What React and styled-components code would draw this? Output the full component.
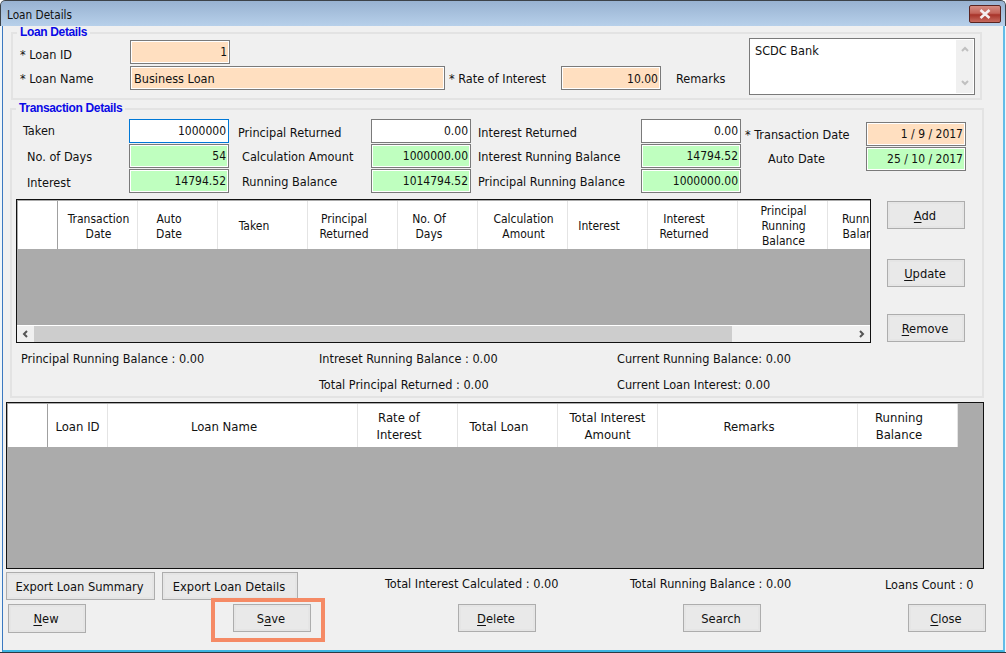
import styled, { createGlobalStyle } from 'styled-components'

const GlobalStyle = createGlobalStyle`
  html, body {
    margin: 0;
    padding: 0;
    background: #fff;
  }
  body {
    font-family: "DejaVu Sans Condensed", "DejaVu Sans", sans-serif;
    font-stretch: condensed;
    font-size: 12.6px;
    color: #111;
  }
`

const Win = styled.div`
  width: 1006px;
  height: 653px;
  box-sizing: border-box;
  border-bottom: 1px solid #2b3a44;
  border-radius: 5px 5px 0 0;
  background: #eef5f9;
  display: flex;
  flex-direction: column;
  overflow: hidden;
`

const TitleBar = styled.div`
  height: 26px;
  flex: none;
  box-sizing: border-box;
  border: 1px solid #3c4248;
  border-bottom: 0;
  border-radius: 5px 5px 0 0;
  background: linear-gradient(180deg, #98b2d1 0, #b7d0ea 100%);
  display: flex;
  align-items: flex-start;
  justify-content: space-between;
  padding: 4px 4px 0 6px;
`

const Title = styled.span`
  font-size: 11.7px;
  line-height: 20px;
`

const CloseX = styled.div`
  width: 32px;
  height: 18px;
  box-sizing: border-box;
  border: 1px solid #5a2420;
  border-radius: 2px;
  background: linear-gradient(180deg, #d68d82 0, #c4645a 45%, #a8342a 55%, #c66a5e 100%);
  display: flex;
  align-items: center;
  justify-content: center;
`

const Client = styled.div`
  flex: 1;
  margin: 0 1px 0 2px;
  background: #f0f0f0;
  padding: 6px 0 0 3px;
  display: flex;
  flex-direction: column;
  border-left: 1px solid #3a78c0;
  border-right: 2px solid #62bce8;
  border-bottom: 2px solid #3db4e0;
`

const Group = styled.fieldset`
  margin: ${(p) => p.$top || 0}px 0 0 ${(p) => p.$left}px;
  padding: 0;
  border: 2px solid #e3e3e3;
  box-sizing: border-box;
  position: relative;
  width: ${(p) => p.$width}px;
  height: ${(p) => p.$height}px;
  flex: none;
`

const GroupTitle = styled.legend`
  position: absolute;
  top: -8px;
  left: 4px;
  padding: 0 3px 0 3px;
  background: #f0f0f0;
  color: #0a0ae6;
  font-family: "Liberation Sans", Arial, sans-serif;
  font-stretch: normal;
  font-weight: 700;
  font-size: 12px;
  letter-spacing: -0.35px;
  line-height: 12px;
`

const LoanForm = styled.div`
  display: grid;
  grid-template-columns: 117px 315px 116px 100px 88px 226px;
  grid-template-rows: 24px 24px;
  row-gap: 2px;
  padding: 6px 0 0 0;
  align-items: center;
`

const Label = styled.label`
  white-space: nowrap;
  padding-left: ${(p) => p.$indent || 0}px;
  padding-top: ${(p) => Math.max(p.$dy || 0, 0) * 2}px;
  padding-bottom: ${(p) => Math.max(-(p.$dy || 0), 0) * 2}px;
`

const Field = styled.div`
  box-sizing: border-box;
  height: 24px;
  width: ${(p) => p.$w || 100}px;
  border: 1px solid ${(p) => (p.$focus ? '#0078d7' : '#7a7a7a')};
  box-shadow: inset 0 0 0 1px #fff;
  background: ${(p) => p.$bg || '#fff'};
  display: flex;
  align-items: center;
  justify-content: ${(p) => (p.$left ? 'flex-start' : 'flex-end')};
  padding: ${(p) => (p.$low ? 2 : 0)}px 2px 0 3px;
  white-space: nowrap;
  font-size: ${(p) => (p.$left ? 12.6 : 12)}px;
`

const RemarksBox = styled.div`
  grid-column: 6;
  grid-row: 1 / span 2;
  align-self: start;
  margin-top: -2px;
  box-sizing: border-box;
  height: 57px;
  width: 226px;
  border: 1px solid #7a7a7a;
  background: #fff;
  padding: 4px 5px;
  position: relative;
`

const RemarksScroll = styled.div`
  position: absolute;
  top: 1px;
  right: 1px;
  bottom: 1px;
  width: 17px;
  background: #f0f0f0;
  display: flex;
  flex-direction: column;
  justify-content: space-between;
  align-items: center;
  padding: 6px 0;
  box-sizing: border-box;
`

const TxForm = styled.div`
  display: grid;
  grid-template-columns: 117px 100px 142px 100px 170px 100px 125px 100px;
  grid-template-rows: 24px 24px 24px;
  row-gap: 1px;
  padding-top: 9px;
  align-items: center;
`

const DateCol = styled.div`
  grid-column: 7 / span 2;
  grid-row: 1 / span 3;
  align-self: start;
  margin-top: 3px;
  display: grid;
  grid-template-columns: 125px 100px;
  grid-template-rows: 24px 24px;
  row-gap: 1px;
  align-items: center;
`

const TableRow = styled.div`
  display: flex;
  margin: 6px 0 0 4px;
`

const GridBox = styled.div`
  box-sizing: border-box;
  width: ${(p) => p.$w}px;
  height: ${(p) => p.$h}px;
  border: 1px solid #111;
  background: #ababab;
  display: flex;
  flex-direction: column;
  overflow: hidden;
  padding: 1px 0 0 1px;
  flex: none;
`

const HeaderRow = styled.div`
  display: flex;
  height: ${(p) => p.$h}px;
  flex: none;
`

const HeadCell = styled.div`
  box-sizing: border-box;
  width: ${(p) => p.$w}px;
  flex: none;
  background: #fff;
  border-right: 1px solid ${(p) => (p.$dark ? '#a0a0a0' : '#e4e4e4')};
  display: flex;
  align-items: center;
  justify-content: center;
  text-align: center;
  font-size: 12px;
  line-height: 15px;
  white-space: pre;
  overflow: hidden;
  padding-top: 3px;
  padding-left: ${(p) => (p.$sort ? 0 : 2)}px;
  padding-right: ${(p) => (p.$sort ? 17 : 0)}px;
`

const LoanHeadCell = styled(HeadCell)`
  font-size: 13px;
  line-height: 17px;
  padding-top: 1px;
  padding-left: 0;
`

const GridBody = styled.div`
  flex: 1;
`

const HScroll = styled.div`
  height: 17px;
  flex: none;
  box-sizing: border-box;
  background: #f0f0f0;
  border-top: 1px solid #fff;
  display: flex;
  align-items: center;
  margin-left: -1px;
`

const ScrollArrow = styled.div`
  width: 17px;
  flex: none;
  display: flex;
  justify-content: center;
`

const ScrollThumb = styled.div`
  width: 698px;
  height: 100%;
  background: #cdcdcd;
`

const ScrollTrack = styled.div`
  flex: 1;
`

const SideButtons = styled.div`
  display: flex;
  flex-direction: column;
  margin: 2px 0 0 16px;
`

const Button = styled.button`
  box-sizing: border-box;
  width: ${(p) => p.$w || 78}px;
  height: ${(p) => p.$h || 28}px;
  margin: 0;
  padding: 0 2px 0 0;
  border: 1px solid #adadad;
  box-shadow: inset 0 0 0 2px #e5e5e5;
  background: #e9e9e9;
  font: inherit;
  font-size: 12.8px;
  color: #111;
  flex: none;
`

const SideButton = styled(Button)`
  margin-top: ${(p) => p.$top}px;
`

const Summary = styled.div`
  display: grid;
  grid-template-columns: 298px 298px 1fr;
  grid-template-rows: 26px 26px;
  padding: 2px 0 0 9px;
  align-items: center;
`

const LoanGridWrap = styled.div`
  margin-top: 4px;
`

const BottomTop = styled.div`
  display: grid;
  grid-template-columns: 156px 223px 245px 255px 1fr;
  align-items: start;
  margin: 3px 0 0 0;
`

const TotalText = styled.span`
  margin-top: ${(p) => p.$top || 4}px;
  white-space: nowrap;
`

const BottomButtons = styled.div`
  display: flex;
  align-items: flex-start;
  gap: 147px;
  margin: 4px 0 0 2px;
`

const Highlight = styled.div`
  position: relative;
  flex: none;
  display: flex;

  &::after {
    content: '';
    position: absolute;
    inset: -6px -14px -10px -22px;
    border: 4px solid #f58a65;
    pointer-events: none;
  }
`

const U = styled.span`
  text-decoration: underline;
  text-underline-offset: 2px;
`

const peach = '#ffdfc0'
const green = '#bfffbf'

const txHead = [
  { w: 40, dark: true, text: '' },
  { w: 80, text: 'Transaction\nDate' },
  { w: 80, sort: true, text: 'Auto\nDate' },
  { w: 90, sort: true, text: 'Taken' },
  { w: 90, sort: true, text: 'Principal\nReturned' },
  { w: 80, sort: true, text: 'No. Of\nDays' },
  { w: 90, text: 'Calculation\nAmount' },
  { w: 80, sort: true, text: 'Interest' },
  { w: 90, sort: true, text: 'Interest\nReturned' },
  { w: 90, text: 'Principal\nRunning\nBalance' },
  { w: 90, sort: true, text: 'Running\nBalance' },
]

const loanHead = [
  { w: 40, dark: true, text: '' },
  { w: 60, text: 'Loan ID' },
  { w: 250, sort: true, text: 'Loan Name' },
  { w: 100, sort: true, text: 'Rate of\nInterest' },
  { w: 100, sort: true, text: 'Total Loan' },
  { w: 100, text: 'Total Interest\nAmount' },
  { w: 200, sort: true, text: 'Remarks' },
  { w: 100, sort: true, text: 'Running\nBalance' },
]

const Chevron = ({ dir }) => {
  const pts = {
    left: '5,1 2,4 5,7',
    right: '2,1 5,4 2,7',
    up: '1,5 4,2 7,5',
    down: '1,2 4,5 7,2',
  }
  return (
    <svg width="8" height="8" viewBox="0 0 8 8">
      <polyline points={pts[dir]} fill="none" stroke={dir === 'up' || dir === 'down' ? '#c0c0c0' : '#555'} strokeWidth="2" />
    </svg>
  )
}

const App = () => {
  return (
    <Win>
      <GlobalStyle />
      <TitleBar>
        <Title>Loan Details</Title>
        <CloseX>
          <svg width="12" height="10" viewBox="0 0 12 10">
            <path d="M1.5 1 L10.5 9 M10.5 1 L1.5 9" stroke="#f4f0f0" strokeWidth="2.6" />
          </svg>
        </CloseX>
      </TitleBar>
      <Client>
        <Group $left={5} $width={971} $height={68}>
          <GroupTitle>Loan Details</GroupTitle>
          <LoanForm>
            <Label $indent={7} $dy={2}>* Loan ID</Label>
            <Field $w={100} $bg={peach}>1</Field>
            <span />
            <span />
            <span />
            <RemarksBox>
              SCDC Bank
              <RemarksScroll>
                <Chevron dir="up" />
                <Chevron dir="down" />
              </RemarksScroll>
            </RemarksBox>
            <Label $indent={7}>* Loan Name</Label>
            <Field $w={315} $bg={peach} $left>Business Loan</Field>
            <Label $indent={4}>* Rate of Interest</Label>
            <Field $w={100} $bg={peach} $low>10.00</Field>
            <Label $indent={15}>Remarks</Label>
          </LoanForm>
        </Group>
        <Group $left={4} $width={974} $height={290} $top={8}>
          <GroupTitle>Transaction Details</GroupTitle>
          <TxForm>
            <Label $indent={11} $dy={-1}>Taken</Label>
            <Field $focus>1000000</Field>
            <Label $indent={9} $dy={1}>Principal Returned</Label>
            <Field>0.00</Field>
            <Label $indent={7} $dy={1}>Interest Returned</Label>
            <Field>0.00</Field>
            <DateCol>
              <Label $indent={4}>* Transaction Date</Label>
              <Field $bg={peach}>1 / 9 / 2017</Field>
              <Label $indent={27} $dy={-1}>Auto Date</Label>
              <Field $bg={green}>25 / 10 / 2017</Field>
            </DateCol>
            <Label $indent={15}>No. of Days</Label>
            <Field $bg={green}>54</Field>
            <Label $indent={13}>Calculation Amount</Label>
            <Field $bg={green}>1000000.00</Field>
            <Label $indent={7}>Interest Running Balance</Label>
            <Field $bg={green}>14794.52</Field>
            <Label $indent={15} $dy={1}>Interest</Label>
            <Field $bg={green}>14794.52</Field>
            <Label $indent={13}>Running Balance</Label>
            <Field $bg={green}>1014794.52</Field>
            <Label $indent={7}>Principal Running Balance</Label>
            <Field $bg={green}>1000000.00</Field>
          </TxForm>
          <TableRow>
            <GridBox $w={855} $h={144}>
              <HeaderRow $h={48}>
                {txHead.map(({ w, dark, sort, text }, i) => (
                  <HeadCell key={i} $w={w} $dark={dark} $sort={sort}>{text}</HeadCell>
                ))}
              </HeaderRow>
              <GridBody />
              <HScroll>
                <ScrollArrow><Chevron dir="left" /></ScrollArrow>
                <ScrollThumb />
                <ScrollTrack />
                <ScrollArrow><Chevron dir="right" /></ScrollArrow>
              </HScroll>
            </GridBox>
            <SideButtons>
              <SideButton $top={0}><U>A</U>dd</SideButton>
              <SideButton $top={30}><U>U</U>pdate</SideButton>
              <SideButton $top={27}><U>R</U>emove</SideButton>
            </SideButtons>
          </TableRow>
          <Summary>
            <span>Principal Running Balance : 0.00</span>
            <span>Intreset Running Balance : 0.00</span>
            <span>Current Running Balance: 0.00</span>
            <span />
            <span>Total Principal Returned : 0.00</span>
            <span>Current Loan Interest: 0.00</span>
          </Summary>
        </Group>
        <LoanGridWrap>
          <GridBox $w={978} $h={167}>
            <HeaderRow $h={43}>
              {loanHead.map(({ w, dark, sort, text }, i) => (
                <LoanHeadCell key={i} $w={w} $dark={dark} $sort={sort}>{text}</LoanHeadCell>
              ))}
            </HeaderRow>
            <GridBody />
          </GridBox>
        </LoanGridWrap>
        <BottomTop>
          <Button $w={149}>Export Loan Summary</Button>
          <Button $w={136}>Export Loan Details</Button>
          <TotalText>Total Interest Calculated : 0.00</TotalText>
          <TotalText>Total Running Balance : 0.00</TotalText>
          <TotalText $top={5}>Loans Count : 0</TotalText>
        </BottomTop>
        <BottomButtons>
          <Button $h={29}><U>N</U>ew</Button>
          <Highlight><Button>S<U>a</U>ve</Button></Highlight>
          <Button><U>D</U>elete</Button>
          <Button>Search</Button>
          <Button><U>C</U>lose</Button>
        </BottomButtons>
      </Client>
    </Win>
  )
}

export default App
